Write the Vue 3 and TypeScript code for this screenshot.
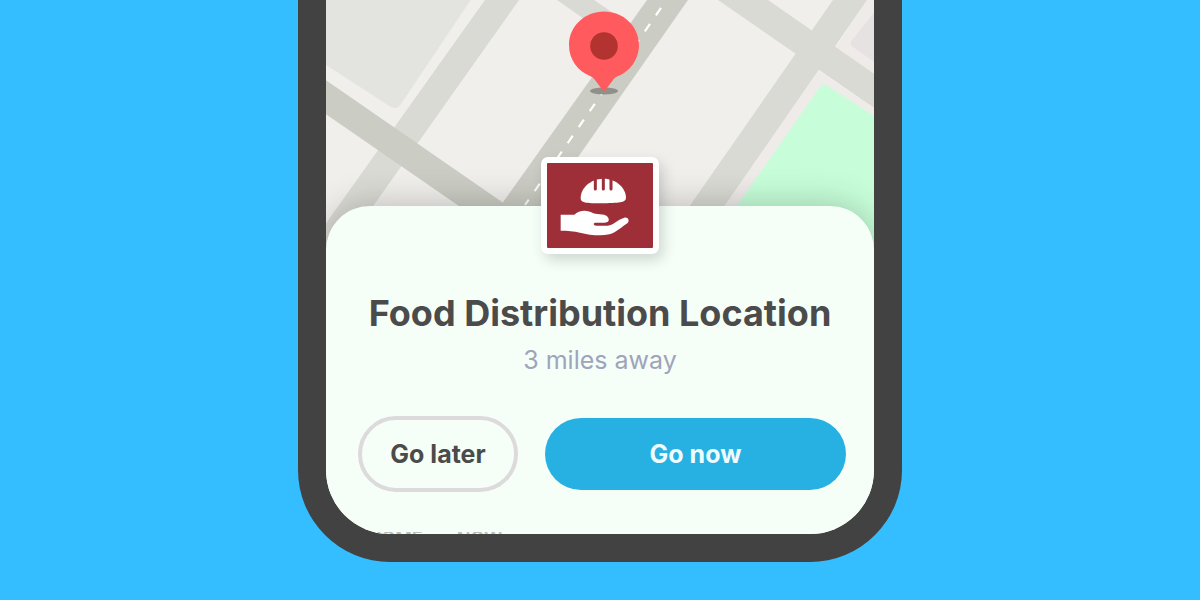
<script setup lang="ts">
interface Place {
  name: string
  distance: string
}

const place: Place = {
  name: 'Food Distribution Location',
  distance: '3 miles away',
}
</script>

<template>
  <main class="page">
    <section class="phone">
      <div class="screen">
        <svg class="map" viewBox="326 0 548 250" preserveAspectRatio="xMidYMin slice" role="img" aria-label="Map">
          <rect x="0" y="0" width="1200" height="250" fill="#f0efec" />
          <path d="M300 47 V-20 H484 L401 104 Q397 110 391 107 L326 65Z" fill="#e3e3df" />
          <path d="M867 0 L836 48 L874 74 V0Z" fill="#eeebe9" />
          <path d="M818 71 L874 108 V250 H694Z" fill="#eeebe9" />
          <path d="M880 5 L852 40 Q849 44 853 47 L880 66Z" fill="#e6e2e1" />
          <path d="M820 87 Q823 82 828 86 L880 120 V250 H706Z" fill="#c7fed9" />
          <g fill="#d9dad3">
            <path d="M485 0 H519 L342 250 H307Z" />
            <path d="M557 0 H594 L650 38 L630 51Z" />
            <path d="M718 0 H768 L880 78 V112Z" />
            <path d="M833 0 H867 L694 250 H659Z" />
          </g>
          <g fill="#cbccc3">
            <path d="M320 76 L502 202 L540 228 V262 L320 110Z" />
            <path d="M647 0 H688 L513 250 H469Z" />
          </g>
          <path d="M672 -8 L525 205" fill="none" stroke="#fff" stroke-width="2.2" stroke-dasharray="9 10.4" />
          <ellipse cx="604" cy="91" rx="14" ry="3.5" fill="#8f9089" />
          <path d="M604 11.5 C623 11.5 639 26 639 45 C639 60 629 72 618 76 Q615 77 613 80 L605.500 90 Q604 92 602.500 90 L595 80 Q593 77 590 76 C578 71 569 60 569 45 C569 26 585 11.500 604 11.500Z" fill="#ff5a5d" />
          <circle cx="604" cy="46" r="13.800" fill="#b23330" />
        </svg>

        <article class="sheet">
          <div class="badge">
            <svg class="badge-art" viewBox="50 55 318 255" aria-hidden="true">
              <path d="M151 160 C151 130 180 103 218 102 C258 101 286 130 287 158 C287 173 274 175 219 176 C163 176 151 174 151 160Z" fill="#fff" />
              <path d="M195 98 V133 M219 98 V133 M242 98 V133" stroke="#9e2f38" stroke-width="9" stroke-linecap="round" />
              <path d="M91 210 H132 C146 196 172 195 189 206 C205 211 228 206 234 220 C238 229 232 234 223 234 H194 Q188 236 191 240 Q192 243 199 243 H232 C251 241 260 225 282 219 C292 216 299 227 292 235 C274 246 259 263 237 269 C211 275 177 271 149 264 C130 259 112 258 91 258Z" fill="#fff" />
            </svg>
          </div>
          <h1 class="title">{{ place.name }}</h1>
          <p class="distance">{{ place.distance }}</p>
          <div class="actions">
            <button type="button" class="button later">Go later</button>
            <button type="button" class="button now">Go now</button>
          </div>
          <p class="next">
            <span>HOME</span>
            <span>NOW</span>
          </p>
        </article>
      </div>
    </section>
  </main>
</template>

<style>
body {
  margin: 0;
  background: #34beff;
}
</style>

<style scoped>
.page {
  min-height: 100vh;
  display: flex;
  justify-content: center;
  align-items: flex-start;
  background: #34beff;
  font-family: Inter, "Liberation Sans", sans-serif;
}

.phone {
  box-sizing: border-box;
  width: 100%;
  max-width: 604px;
  padding: 0 28px 28px;
  border-radius: 0 0 92px 92px;
  background: #424242;
}

.screen {
  overflow: hidden;
  border-radius: 0 0 64px 64px;
  background: #f5fff7;
}

.map {
  display: block;
  width: 100%;
  height: 250px;
}

.sheet {
  position: relative;
  display: flex;
  flex-direction: column;
  align-items: center;
  margin-top: -44px;
  border-radius: 44px 44px 0 0;
  background: #f5fff7;
  box-shadow: 0 0 36px rgba(0, 0, 0, 0.24);
}

.badge {
  width: 106px;
  height: 85px;
  margin-top: -49px;
  border: 6px solid #fff;
  border-radius: 7px;
  background: #9e2f38;
  box-shadow: 4px 6px 14px rgba(0, 0, 0, 0.16);
}

.badge-art {
  display: block;
  width: 100%;
}

.title {
  margin: 37px 0 0;
  font-size: 36px;
  line-height: 44px;
  font-weight: 700;
  color: #4a4b4a;
  text-align: center;
}

.distance {
  margin: 9px 0 0;
  font-size: 25px;
  line-height: 32px;
  color: #9fa4bb;
}

.actions {
  align-self: stretch;
  display: flex;
  align-items: center;
  gap: 27px;
  margin-top: 40px;
  padding: 0 28px 0 32px;
}

.button {
  box-sizing: border-box;
  height: 72px;
  padding: 0;
  border: 0;
  border-radius: 38px;
  font: inherit;
  font-size: 25px;
  font-weight: 700;
}

.later {
  flex: 0 0 160px;
  height: 76px;
  border: 4px solid #dcdadb;
  background: transparent;
  color: #4a4b4a;
}

.now {
  flex: 1;
  background: #27b1e2;
  color: #effcff;
}

.next {
  align-self: flex-start;
  display: flex;
  gap: 34px;
  height: 2px;
  margin: 40px 0 0 42px;
  overflow: hidden;
  font-size: 18px;
  line-height: 14px;
  font-weight: 600;
  color: #b9bdb9;
}
</style>
